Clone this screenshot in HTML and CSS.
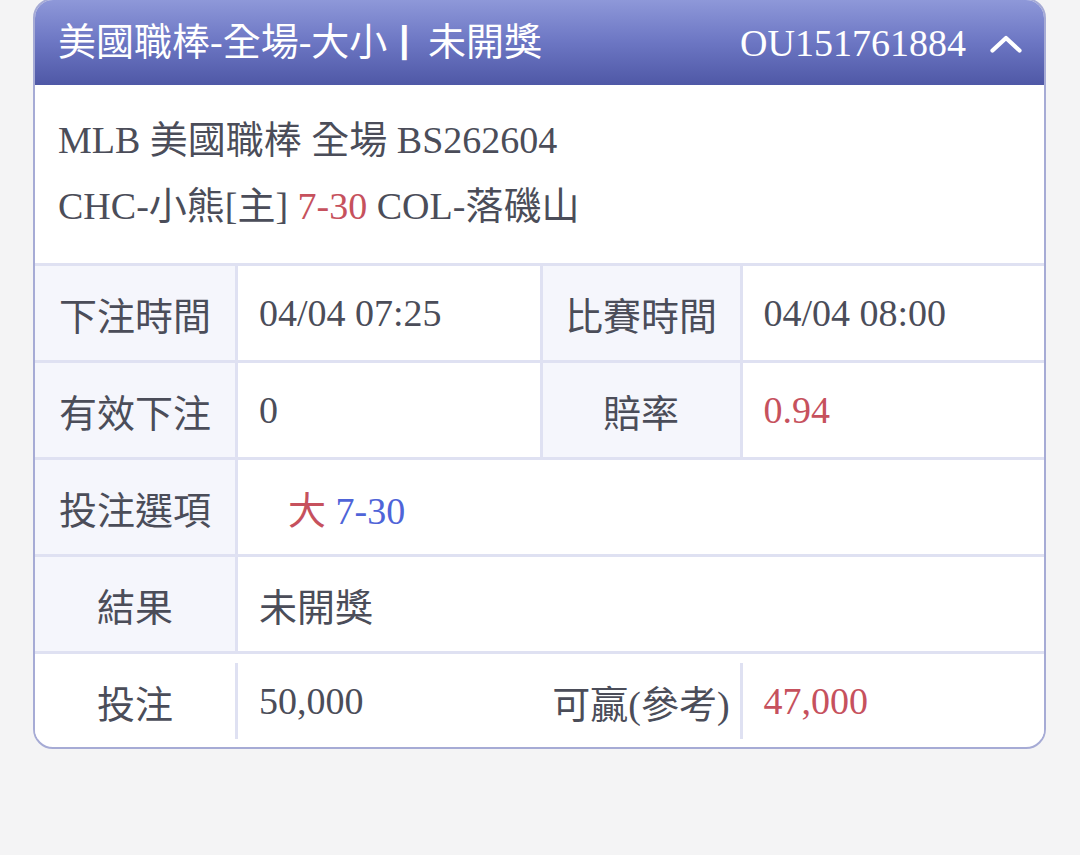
FILE: index.html
```html
<!DOCTYPE html>
<html lang="zh-Hant">
<head>
<meta charset="utf-8">
<title>注單</title>
<link rel="stylesheet" href="styles.css">
</head>
<body>
<div class="card">
  <div class="card-head">
    <div class="head-title">美國職棒-全場-大小<span class="bar">|</span> 未開獎</div>
    <div class="head-right">
      <span class="head-id">OU151761884</span>
      <svg class="chev" width="32" height="18" viewBox="0 0 32 18"><polyline points="2.5,15.5 16,3 29.5,15.5" fill="none" stroke="#ffffff" stroke-width="4.2" stroke-linecap="round" stroke-linejoin="round"/></svg>
    </div>
  </div>
  <div class="info">
    <div class="info-line">MLB 美國職棒 全場 BS262604</div>
    <div class="info-line">CHC-小熊[主] <span class="red">7-30</span> COL-落磯山</div>
  </div>
  <div class="table">
    <div class="row">
      <div class="cell label">下注時間</div>
      <div class="cell value">04/04 07:25</div>
      <div class="cell label">比賽時間</div>
      <div class="cell value">04/04 08:00</div>
    </div>
    <div class="row">
      <div class="cell label">有效下注</div>
      <div class="cell value">0</div>
      <div class="cell label">賠率</div>
      <div class="cell value red">0.94</div>
    </div>
    <div class="row">
      <div class="cell label">投注選項</div>
      <div class="cell value wide pick"><span><span class="red">大</span> <span class="blue">7-30</span></span></div>
    </div>
    <div class="row">
      <div class="cell label">結果</div>
      <div class="cell value wide">未開獎</div>
    </div>
    <div class="row last">
      <div class="cell label plain">投注</div>
      <div class="cell value">50,000</div>
      <div class="cell label plain nodiv">可贏(參考)</div>
      <div class="cell value red">47,000</div>
    </div>
  </div>
</div>
</body>
</html>
```
FILE: styles.css
```css
html, body {
  margin: 0;
  padding: 0;
  background: #f4f4f5;
}
body {
  font-family: "Liberation Serif", "Noto Sans CJK TC", serif;
  color: #4b4d59;
  font-size: 38px;
}
.card {
  margin: -2px 34px 0 33px;
  border: 2px solid #a6abd5;
  border-radius: 20px;
  background: #ffffff;
  overflow: hidden;
}
.card-head {
  height: 85px;
  display: flex;
  align-items: center;
  justify-content: space-between;
  padding: 0 22px 0 23px;
  background: linear-gradient(to bottom, #8e98d9 0%, #6c76c3 50%, #4f58a6 100%);
  color: #ffffff;
}
.head-title {
  line-height: 1;
  padding-bottom: 2px;
}
.bar {
  font-weight: 700;
  font-family: "Liberation Sans", sans-serif;
  font-size: 36px;
  vertical-align: 3px;
  margin-left: 12px;
  margin-right: 9px;
}
.head-right {
  display: flex;
  align-items: center;
  gap: 24px;
}
.head-id {
  line-height: 1;
}
.chev {
  display: block;
  margin-top: 2px;
}
.info {
  padding: 22px 23px 24px;
}
.info-line {
  line-height: 66px;
  white-space: nowrap;
}
.red { color: #c6515d; }
.blue { color: #4f64d8; }
.row {
  display: grid;
  grid-template-columns: 200px 1fr 200px 1fr;
  border-top: 3px solid #dfe1f2;
  height: 94px;
}
.cell {
  display: flex;
  align-items: center;
}
.cell + .cell {
  border-left: 3px solid #dfe1f2;
}
.label {
  justify-content: center;
  background: #f5f6fc;
  white-space: nowrap;
}
.value {
  padding-left: 21px;
  background: #ffffff;
}
.wide {
  grid-column: 2 / 5;
}
.pick {
  padding-left: 50px;
}
.row.last {
  height: auto;
  padding: 9px 0 8px;
}
.row.last .cell {
  height: 76px;
}
.plain {
  background: #ffffff;
}
.row.last .nodiv {
  border-left-color: transparent;
}
```
